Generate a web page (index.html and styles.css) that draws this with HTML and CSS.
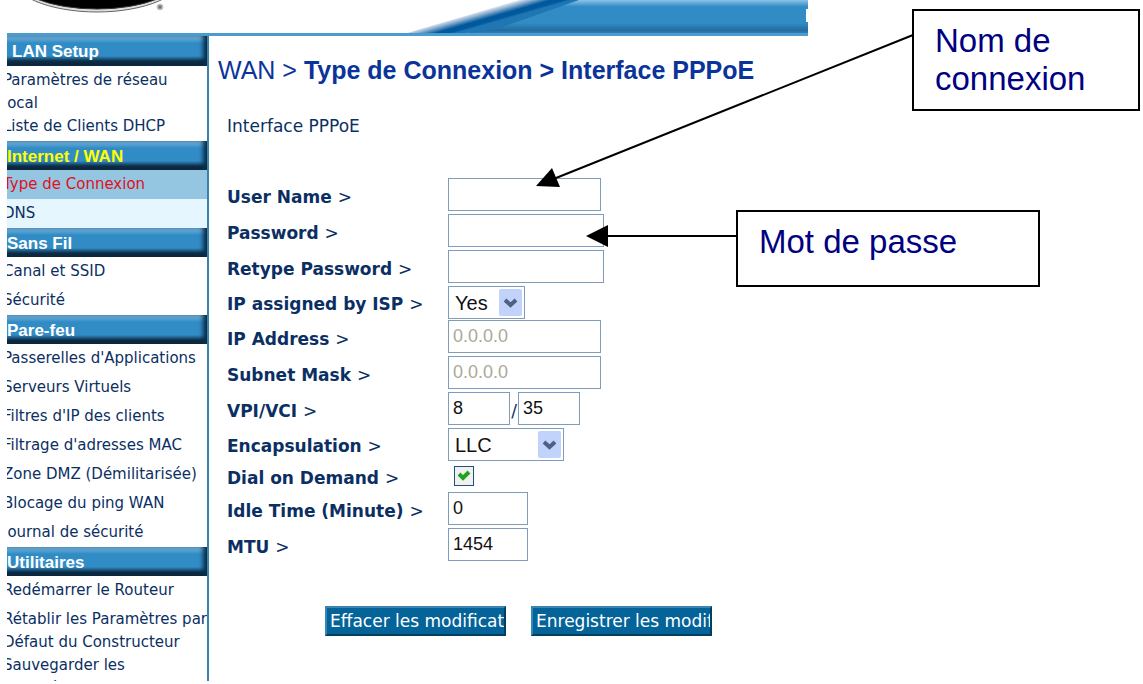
FILE: index.html
```html
<!DOCTYPE html>
<html lang="fr">
<head>
    <meta charset="UTF-8">
    <meta name="viewport" content="width=device-width, initial-scale=1.0">
    <title>WAN - Interface PPPoE</title>
    <link rel="stylesheet" href="styles.css">
</head>
<body>

    <div class="router">
        <!-- Header -->
        <header>
            <svg class="logo" width="170" height="33" viewBox="0 0 170 33">
                <ellipse cx="90" cy="-25" rx="87" ry="37" fill="#ddd" stroke="#666" stroke-width="1"/>
                <ellipse cx="90" cy="-25" rx="85" ry="34" fill="#000" stroke="#333" stroke-width="1"/>
                <circle cx="153" cy="7" r="3" fill="#999" stroke="#ccc"/>
                <circle cx="153" cy="7" r="1" fill="#666"/>
            </svg>
            <svg class="banner" width="401" height="33" viewBox="0 0 401 33">
                <defs>
                    <linearGradient id="bar" x1="0" y1="0" x2="0" y2="1">
                        <stop offset="0" stop-color="#8cc4e6"/>
                        <stop offset="0.2" stop-color="#318cc6"/>
                        <stop offset="0.7" stop-color="#318cc6"/>
                        <stop offset="0.92" stop-color="#226c9f"/>
                        <stop offset="1" stop-color="#2f80b5"/>
                    </linearGradient>
                    <linearGradient id="edge" gradientUnits="userSpaceOnUse" x1="56" y1="16" x2="60" y2="30">
                        <stop offset="0" stop-color="#e3ebf3"/>
                        <stop offset="0.25" stop-color="#8db0d0"/>
                        <stop offset="0.6" stop-color="#01599d"/>
                        <stop offset="0.85" stop-color="#01599d"/>
                        <stop offset="1" stop-color="#1f76b3"/>
                    </linearGradient>
                </defs>
                <path d="M60 33 L165 0 H401 V33 Z" fill="url(#bar)"/>
                <path d="M0 33 L112 0 H172 L95 27 Q75 33 58 33 Z" fill="url(#edge)"/>
                <path d="M401 9 H399 V22 H401 Z" fill="#fff"/>
            </svg>
        </header>

        <div class="content">
            <!-- Menu -->
            <nav>
                <h2 class="first">LAN Setup</h2>
                <ul>
                    <li class="double"><a href="#">Paramètres de réseau<br>local</a></li>
                    <li><a href="#">Liste de Clients DHCP</a></li>
                </ul>
                <h2 class="current">Internet / WAN</h2>
                <ul>
                    <li class="selected"><a href="#">Type de Connexion</a></li>
                    <li class="sub"><a href="#">DNS</a></li>
                </ul>
                <h2>Sans Fil</h2>
                <ul>
                    <li><a href="#">Canal et SSID</a></li>
                    <li><a href="#">Sécurité</a></li>
                </ul>
                <h2>Pare-feu</h2>
                <ul>
                    <li><a href="#">Passerelles d'Applications</a></li>
                    <li><a href="#">Serveurs Virtuels</a></li>
                    <li><a href="#">Filtres d'IP des clients</a></li>
                    <li><a href="#">Filtrage d'adresses MAC</a></li>
                    <li><a href="#">Zone DMZ (Démilitarisée)</a></li>
                    <li><a href="#">Blocage du ping WAN</a></li>
                    <li><a href="#">Journal de sécurité</a></li>
                </ul>
                <h2>Utilitaires</h2>
                <ul>
                    <li><a href="#">Redémarrer le Routeur</a></li>
                    <li class="double"><a href="#">Rétablir les Paramètres par<br>Défaut du Constructeur</a></li>
                    <li><a href="#">Sauvegarder les<br>paramètres</a></li>
                </ul>
            </nav>

            <!-- PPPoE form -->
            <main>
                <h1><span class="light">WAN &gt;</span> Type de Connexion &gt; Interface PPPoE</h1>
                <p class="intro">Interface PPPoE</p>
                <form>
                    <table>
                        <tr>
                            <th><label for="user">User Name <span class="light">&gt;</span></label></th>
                            <td><input type="text" id="user" class="medium"></td>
                        </tr>
                        <tr>
                            <th><label for="password">Password <span class="light">&gt;</span></label></th>
                            <td><input type="password" id="password" class="large"></td>
                        </tr>
                        <tr>
                            <th><label for="retype">Retype Password <span class="light">&gt;</span></label></th>
                            <td><input type="password" id="retype" class="large"></td>
                        </tr>
                        <tr class="list-row">
                            <th><label for="assigned">IP assigned by ISP <span class="light">&gt;</span></label></th>
                            <td>
                                <div class="select yes">
                                    <select id="assigned"><option>Yes</option><option>No</option></select>
                                    <svg width="23" height="27" viewBox="0 0 23 27"><rect width="23" height="27" rx="2" fill="#c1d2fb"/><path d="M6 11 L11.500 16 L17 11" fill="none" stroke="#4d6185" stroke-width="4"/></svg>
                                </div>
                            </td>
                        </tr>
                        <tr>
                            <th><label for="ip">IP Address <span class="light">&gt;</span></label></th>
                            <td><input type="text" id="ip" class="medium" value="0.0.0.0" disabled></td>
                        </tr>
                        <tr>
                            <th><label for="mask">Subnet Mask <span class="light">&gt;</span></label></th>
                            <td><input type="text" id="mask" class="medium" value="0.0.0.0" disabled></td>
                        </tr>
                        <tr>
                            <th><label for="vpi">VPI/VCI <span class="light">&gt;</span></label></th>
                            <td>
                                <div class="pair">
                                    <input type="text" id="vpi" class="tiny" value="8"><span>/</span><input type="text" class="tiny" value="35" aria-label="VCI">
                                </div>
                            </td>
                        </tr>
                        <tr class="list-row">
                            <th><label for="encapsulation">Encapsulation <span class="light">&gt;</span></label></th>
                            <td>
                                <div class="select llc">
                                    <select id="encapsulation"><option>LLC</option><option>VC MUX</option></select>
                                    <svg width="23" height="27" viewBox="0 0 23 27"><rect width="23" height="27" rx="2" fill="#c1d2fb"/><path d="M6 11 L11.500 16 L17 11" fill="none" stroke="#4d6185" stroke-width="4"/></svg>
                                </div>
                            </td>
                        </tr>
                        <tr class="check-row">
                            <th><label for="demand">Dial on Demand <span class="light">&gt;</span></label></th>
                            <td>
                                <div class="check">
                                    <input type="checkbox" id="demand" checked>
                                    <svg width="20" height="20" viewBox="0 0 20 20"><path d="M5 8 L9 12 L15 6" fill="none" stroke="#21a121" stroke-width="4"/></svg>
                                </div>
                            </td>
                        </tr>
                        <tr>
                            <th><label for="idle">Idle Time (Minute) <span class="light">&gt;</span></label></th>
                            <td><input type="text" id="idle" class="small" value="0"></td>
                        </tr>
                        <tr>
                            <th><label for="mtu">MTU <span class="light">&gt;</span></label></th>
                            <td><input type="text" id="mtu" class="small" value="1454"></td>
                        </tr>
                    </table>
                    <div class="buttons">
                        <button type="reset">Effacer les modifications</button>
                        <button type="button">Enregistrer les modifications</button>
                    </div>
                </form>
            </main>
        </div>
    </div>

    <!-- Annotations -->
    <svg class="arrows" width="1143" height="300" viewBox="0 0 1143 300">
        <path d="M913 35 L556 178 M737 236 H606" fill="none" stroke="#000" stroke-width="2"/>
        <path d="M536 186 L552 168 L560 187 Z M586 236 L608 225 V247 Z"/>
    </svg>
    <div class="note note-user">Nom de<br>connexion</div>
    <div class="note note-password">Mot de passe</div>

</body>
</html>
```

FILE: styles.css
```css
* {
    box-sizing: border-box;
}
body {
    margin: 0;
    background-color: #fff;
    font-family: "DejaVu Sans", Verdana, sans-serif;
    color: #0b2f63;
}
.router {
    margin-left: 7px;
    max-width: 801px;
    height: calc(100vh - 3px);
    overflow: hidden;
}

/* Header */
header {
    display: flex;
    justify-content: space-between;
    border-bottom: 3px solid #4c9bcf;
}
header svg {
    display: block;
}

/* Menu */
.content {
    display: flex;
}
nav {
    flex: 0 0 202px;
    border-right: 2px solid #3682aa;
    overflow: hidden;
}
nav h2 {
    margin: 0;
    height: 29px;
    line-height: 32px;
    font-family: "Liberation Sans", Arial, sans-serif;
    font-size: 17px;
    color: #fff;
    white-space: nowrap;
    background: linear-gradient(#7ab6dd 0, #318cc6 7px, #318cc6 20px, #0d2e48 25px, #0a2438 100%);
    box-shadow: inset -5px 0 4px -1px #0d2e48;
}
nav h2.first {
    height: 30px;
    padding-left: 5px;
}
nav h2.current {
    color: #ff0;
}
nav ul {
    list-style: none;
    margin: 0;
    padding: 0;
}
nav li {
    padding: 3px 0;
    font-size: 15px;
    line-height: 23px;
    white-space: nowrap;
}
nav li a {
    display: block;
    margin-left: -4px;
    color: #0b2f63;
    text-decoration: none;
}
nav li.double {
    padding-bottom: 0;
}
nav li.double + li {
    padding-top: 0;
}
nav li.selected {
    background-color: #94c6e2;
}
nav li.selected a {
    color: #e01020;
}
nav li.sub {
    background-color: #e5f6ff;
}

/* Form */
main {
    flex: 1;
    padding: 18px 0 0 18px;
}
h1 {
    margin: 0 0 0 -9px;
    font-family: "Liberation Sans", Arial, sans-serif;
    font-size: 25px;
    line-height: 32px;
    color: #0a3499;
    white-space: nowrap;
}
.light {
    font-weight: normal;
}
.intro {
    margin: 28px 0 40px;
    font-size: 17px;
    line-height: 24px;
}
table {
    border-collapse: collapse;
}
tr {
    height: 36px;
}
tr.list-row {
    height: 34px;
}
tr.check-row {
    height: 30px;
}
th {
    width: 221px;
    padding: 2px 0 0;
    text-align: left;
    font-size: 17px;
    line-height: 24px;
    white-space: nowrap;
}
td {
    padding: 0;
    vertical-align: top;
}
input, select {
    display: block;
    height: 33px;
    margin: 0;
    padding: 0 4px;
    border: 1px solid #7f9db9;
    border-radius: 0;
    background-color: #fff;
    font-family: "Liberation Sans", Arial, sans-serif;
    font-size: 18px;
    color: #111;
}
input:disabled {
    color: #aca899;
}
.large {
    width: 156px;
}
.medium {
    width: 153px;
}
.small {
    width: 80px;
}
.tiny {
    width: 62px;
}
.pair {
    display: flex;
    align-items: center;
}
.pair span {
    width: 8px;
    padding-top: 5px;
    text-align: center;
    font-size: 17px;
}
.select {
    position: relative;
}
.select select {
    appearance: none;
    width: 100%;
    padding-left: 6px;
    font-size: 20px;
}
.select svg {
    position: absolute;
    top: 3px;
    right: 3px;
    pointer-events: none;
}
.yes {
    width: 77px;
}
.llc {
    width: 116px;
}
.check {
    position: relative;
    margin: 4px 6px;
}
.check input {
    appearance: none;
    width: 20px;
    height: 20px;
    padding: 0;
    border: 1px solid #1c5180;
    background-color: #f0f0ec;
}
.check svg {
    position: absolute;
    top: 0;
    left: 0;
    display: none;
    pointer-events: none;
}
.check input:checked + svg {
    display: block;
}
.buttons {
    display: flex;
    gap: 25px;
    margin: 42px 0 0 98px;
}
button {
    width: 181px;
    height: 30px;
    padding: 0 3px;
    border: 2px solid;
    border-color: #3987b0 #03405f #03405f #3987b0;
    background-color: #046499;
    font-family: "DejaVu Sans", Verdana, sans-serif;
    font-size: 17px;
    color: #fff;
    text-align: left;
    white-space: nowrap;
    overflow: hidden;
}

/* Annotations */
.arrows {
    position: absolute;
    top: 0;
    left: 0;
    pointer-events: none;
}
.note {
    position: absolute;
    border: 2px solid #000;
    padding: 11px 21px;
    background-color: #fff;
    font-family: "Liberation Sans", Arial, sans-serif;
    font-size: 33px;
    line-height: 38px;
    color: #000080;
}
.note-user {
    top: 9px;
    left: 912px;
    width: 228px;
    height: 102px;
}
.note-password {
    top: 210px;
    left: 736px;
    width: 304px;
    height: 77px;
}
```
